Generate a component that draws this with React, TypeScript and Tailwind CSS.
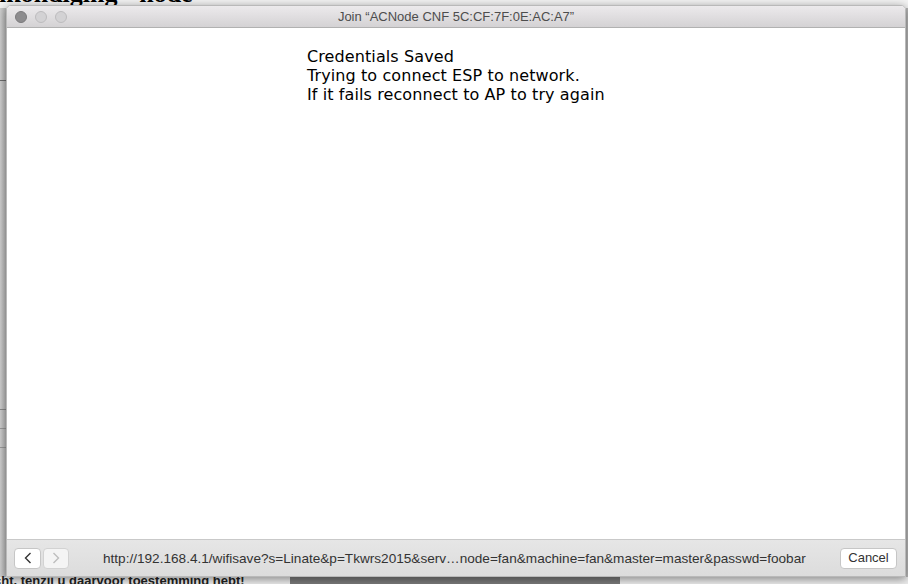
import React from 'react';

const url =
    'http://192.168.4.1/wifisave?s=Linate&p=Tkwrs2015&serv\u2026node=fan&machine=fan&master=master&passwd=foobar';

const TrafficLight: React.FC<{ active?: boolean }> = ({ active }) => (
    <div
        className={
            active
                ? 'w-[12px] h-[12px] rounded-full bg-[#8d8c8e] border border-[#7b7a7c]'
                : 'w-[12px] h-[12px] rounded-full bg-[#d3d2d4] border border-[#bdbcbe]'
        }
    />
);

export default function App() {
    return (
        <div
            className="relative w-[908px] h-[584px] overflow-hidden bg-[#f3f3f3]"
            style={{ fontFamily: '"Liberation Sans", Arial, sans-serif' }}
        >
            {/* page behind the sheet, dimmed */}
            <div className="absolute inset-0 flex flex-col">
                <div
                    className="h-[28px] -mt-[20px] -ml-[40px] text-[26px] leading-[28px] font-bold text-black whitespace-nowrap"
                    style={{ fontFamily: '"Liberation Serif", serif' }}
                >
                    Aankondiging - node
                </div>
                <div className="flex-1 flex justify-between">
                    <div className="w-[6px] bg-gradient-to-r from-[#cfcfcf] to-[#b9b9b9] flex flex-col">
                        <div className="mt-[72px] h-px bg-[#6e6e6e]" />
                        <div className="mt-[328px] h-px bg-[#8a8a8a]" />
                        <div className="mt-[18px] h-px bg-[#9a9a9a]" />
                        <div className="mt-[18px] h-px bg-[#9a9a9a]" />
                    </div>
                    <div className="w-[2px] bg-[#b8b8b8]" />
                </div>
                <div className="relative h-[7px] bg-[#ececec]">
                    <div className="ml-[290px] w-[330px] h-[7px] bg-[#7a7a7a]" />
                    <div className="absolute left-[-6px] top-[-3px] text-[13px] font-bold text-[#222] whitespace-nowrap leading-[14px]">
                        cht, tenzij u daarvoor toestemming hebt!
                    </div>
                </div>
            </div>

            {/* sheet window */}
            <div className="absolute left-[6px] top-[5px] w-[900px] h-[572px] rounded-t-[5px] overflow-hidden flex flex-col bg-white shadow-[0_2px_10px_rgba(0,0,0,0.45)] border border-[#b9b9b9]">
                <div className="relative h-[22px] shrink-0 flex items-center bg-gradient-to-b from-[#eceaec] to-[#d4d2d4] border-b border-[#b1b1b1]">
                    <div className="flex items-center gap-[8px] pl-[8px]">
                        <TrafficLight active />
                        <TrafficLight />
                        <TrafficLight />
                    </div>
                    <div className="absolute inset-0 flex items-center justify-center text-[13px] text-[#4d4d4d]">
                        Join “ACNode CNF 5C:CF:7F:0E:AC:A7”
                    </div>
                </div>

                <div className="flex-1 bg-white">
                    <div
                        className="pl-[300px] pt-[19px] text-[16px] leading-[19px] tracking-[0.1px] text-black"
                        style={{ fontFamily: '"DejaVu Sans", Verdana, sans-serif' }}
                    >
                        <div>Credentials Saved</div>
                        <div>Trying to connect ESP to network.</div>
                        <div>If it fails reconnect to AP to try again</div>
                    </div>
                </div>

                <div className="h-[37px] shrink-0 flex items-center border-t border-[#c9c9c9] bg-gradient-to-b from-[#e6e6e6] to-[#dcdcdc]">
                    <div className="flex gap-[2px] pl-[7px]">
                        <div className="w-[27px] h-[21px] rounded-[4px] bg-white border border-[#c6c6c6] flex items-center justify-center">
                            <svg width="8" height="12" viewBox="0 0 8 12">
                                <path d="M6.5 1 L1.5 6 L6.5 11" fill="none" stroke="#333" strokeWidth="1.4" />
                            </svg>
                        </div>
                        <div className="w-[26px] h-[21px] rounded-[4px] bg-[#f4f4f4] border border-[#d2d2d2] flex items-center justify-center">
                            <svg width="8" height="12" viewBox="0 0 8 12">
                                <path d="M1.5 1 L6.5 6 L1.5 11" fill="none" stroke="#bdbdbd" strokeWidth="1.4" />
                            </svg>
                        </div>
                    </div>
                    <div className="ml-[34px] pt-[3px] text-[13.6px] text-[#333] whitespace-nowrap">{url}</div>
                    <div className="ml-auto mr-[8px] w-[57px] h-[21px] rounded-[4px] bg-white border border-[#c6c6c6] flex items-center justify-center text-[13px] text-[#333]">
                        Cancel
                    </div>
                </div>
            </div>
        </div>
    );
}
